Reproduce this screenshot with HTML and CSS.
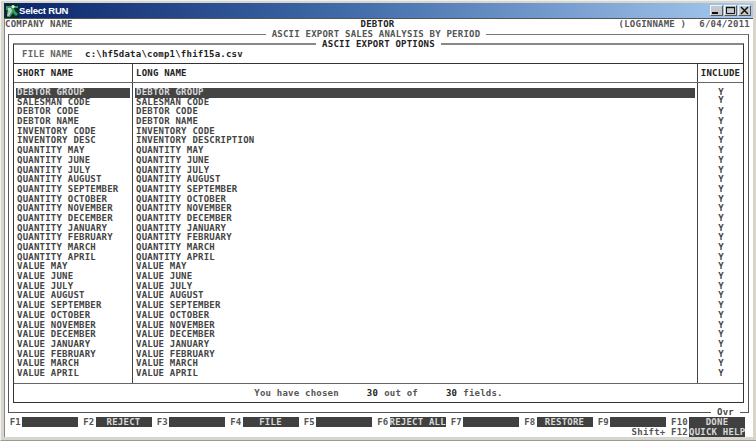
FILE: index.html
```html
<!DOCTYPE html>
<html lang="en">
<head>
<meta charset="utf-8">
<title>Select RUN</title>
<link rel="stylesheet" href="styles.css">
</head>
<body>
<div class="window">
  <div class="titlebar">
    <svg class="app-icon" width="14" height="14" viewBox="0 0 14 14">
      <rect width="14" height="14" fill="#0b2a24"/>
      <path d="M1 2h5l1 2 2-2h4v2H9l1 3 3 3-2 2-3-3-3 4H2l3-6-2-1H1z" fill="#2f9e5f"/>
      <circle cx="8" cy="2.5" r="1.6" fill="#e8f2ea"/>
      <path d="M3 4h3l1 3-3 5H2z" fill="#e8f2ea" opacity=".7"/>
    </svg>
    <span class="title-text">Select RUN</span>
    <div class="win-buttons">
      <span class="win-btn"><svg width="11" height="9" viewBox="0 0 11 9"><rect x="1" y="6" width="6" height="2" fill="#111"/></svg></span>
      <span class="win-btn"><svg width="11" height="9" viewBox="0 0 11 9"><path d="M1.5 1.5h8v6h-8z" fill="none" stroke="#111"/><path d="M1 1.5h9" stroke="#111" stroke-width="1.4"/></svg></span>
      <span class="win-btn"><svg width="11" height="9" viewBox="0 0 11 9"><path d="M2 1l7 7M9 1l-7 7" stroke="#111" stroke-width="1.5"/></svg></span>
    </div>
  </div>
  <div class="client">
    <div class="head-row">
      <span class="head-left">COMPANY NAME</span>
      <span class="head-mid">DEBTOR</span>
      <span class="head-right"><span>(LOGINNAME )</span><span>6/04/2011</span></span>
    </div>
    <div class="rule-title sub-title"><span>ASCII EXPORT SALES ANALYSIS BY PERIOD</span></div>
    <div class="outer-frame">
      <div class="rule-title options-title"><span>ASCII EXPORT OPTIONS</span></div>
      <div class="inner-frame">
        <div class="file-row"><span class="file-label">FILE NAME</span><span class="file-path">c:\hf5data\comp1\fhif15a.csv</span></div>
        <div class="grid-head">
          <div class="col-short">SHORT NAME</div>
          <div class="col-long">LONG NAME</div>
          <div class="col-inc">INCLUDE</div>
        </div>
        <div class="grid-body">
          <div class="col-short list">
            <div class="row sel">DEBTOR GROUP</div>
            <div class="row">SALESMAN CODE</div>
            <div class="row">DEBTOR CODE</div>
            <div class="row">DEBTOR NAME</div>
            <div class="row">INVENTORY CODE</div>
            <div class="row">INVENTORY DESC</div>
            <div class="row">QUANTITY MAY</div>
            <div class="row">QUANTITY JUNE</div>
            <div class="row">QUANTITY JULY</div>
            <div class="row">QUANTITY AUGUST</div>
            <div class="row">QUANTITY SEPTEMBER</div>
            <div class="row">QUANTITY OCTOBER</div>
            <div class="row">QUANTITY NOVEMBER</div>
            <div class="row">QUANTITY DECEMBER</div>
            <div class="row">QUANTITY JANUARY</div>
            <div class="row">QUANTITY FEBRUARY</div>
            <div class="row">QUANTITY MARCH</div>
            <div class="row">QUANTITY APRIL</div>
            <div class="row">VALUE MAY</div>
            <div class="row">VALUE JUNE</div>
            <div class="row">VALUE JULY</div>
            <div class="row">VALUE AUGUST</div>
            <div class="row">VALUE SEPTEMBER</div>
            <div class="row">VALUE OCTOBER</div>
            <div class="row">VALUE NOVEMBER</div>
            <div class="row">VALUE DECEMBER</div>
            <div class="row">VALUE JANUARY</div>
            <div class="row">VALUE FEBRUARY</div>
            <div class="row">VALUE MARCH</div>
            <div class="row">VALUE APRIL</div>
          </div>
          <div class="col-long list">
            <div class="row sel">DEBTOR GROUP</div>
            <div class="row">SALESMAN CODE</div>
            <div class="row">DEBTOR CODE</div>
            <div class="row">DEBTOR NAME</div>
            <div class="row">INVENTORY CODE</div>
            <div class="row">INVENTORY DESCRIPTION</div>
            <div class="row">QUANTITY MAY</div>
            <div class="row">QUANTITY JUNE</div>
            <div class="row">QUANTITY JULY</div>
            <div class="row">QUANTITY AUGUST</div>
            <div class="row">QUANTITY SEPTEMBER</div>
            <div class="row">QUANTITY OCTOBER</div>
            <div class="row">QUANTITY NOVEMBER</div>
            <div class="row">QUANTITY DECEMBER</div>
            <div class="row">QUANTITY JANUARY</div>
            <div class="row">QUANTITY FEBRUARY</div>
            <div class="row">QUANTITY MARCH</div>
            <div class="row">QUANTITY APRIL</div>
            <div class="row">VALUE MAY</div>
            <div class="row">VALUE JUNE</div>
            <div class="row">VALUE JULY</div>
            <div class="row">VALUE AUGUST</div>
            <div class="row">VALUE SEPTEMBER</div>
            <div class="row">VALUE OCTOBER</div>
            <div class="row">VALUE NOVEMBER</div>
            <div class="row">VALUE DECEMBER</div>
            <div class="row">VALUE JANUARY</div>
            <div class="row">VALUE FEBRUARY</div>
            <div class="row">VALUE MARCH</div>
            <div class="row">VALUE APRIL</div>
          </div>
          <div class="col-inc list">
            <div class="row">Y</div><div class="row row-up">Y</div><div class="row">Y</div><div class="row">Y</div><div class="row">Y</div>
            <div class="row">Y</div><div class="row">Y</div><div class="row">Y</div><div class="row">Y</div><div class="row">Y</div>
            <div class="row">Y</div><div class="row">Y</div><div class="row">Y</div><div class="row">Y</div><div class="row">Y</div>
            <div class="row">Y</div><div class="row">Y</div><div class="row">Y</div><div class="row">Y</div><div class="row">Y</div>
            <div class="row">Y</div><div class="row">Y</div><div class="row">Y</div><div class="row">Y</div><div class="row">Y</div>
            <div class="row">Y</div><div class="row">Y</div><div class="row">Y</div><div class="row">Y</div><div class="row">Y</div>
          </div>
        </div>
        <div class="summary"><span>You have chosen</span><b>30</b><span>out of</span><b>30</b><span>fields.</span></div>
      </div>
      <div class="ovr">Ovr</div>
    </div>
    <div class="fkeys">
      <div class="fkey"><span class="f-name">F1</span><span class="f-bar"></span></div>
      <div class="fkey"><span class="f-name">F2</span><span class="f-bar">REJECT</span></div>
      <div class="fkey"><span class="f-name">F3</span><span class="f-bar"></span></div>
      <div class="fkey"><span class="f-name">F4</span><span class="f-bar">FILE</span></div>
      <div class="fkey"><span class="f-name">F5</span><span class="f-bar"></span></div>
      <div class="fkey"><span class="f-name">F6</span><span class="f-bar">REJECT ALL</span></div>
      <div class="fkey"><span class="f-name">F7</span><span class="f-bar"></span></div>
      <div class="fkey"><span class="f-name">F8</span><span class="f-bar">RESTORE</span></div>
      <div class="fkey"><span class="f-name">F9</span><span class="f-bar"></span></div>
      <div class="fkey-stack">
        <div class="fkey"><span class="f-name">F10</span><span class="f-bar">DONE</span></div>
        <div class="fkey"><span class="f-name">Shift+ F12</span><span class="f-bar">QUICK HELP</span></div>
      </div>
    </div>
  </div>
</div>
</body>
</html>
```
FILE: styles.css
```css
* { box-sizing: border-box; }
html, body { margin: 0; padding: 0; }
body { width: 756px; height: 441px; overflow: hidden; background: #d4d0c8; }
.window {
  width: 756px; height: 441px;
  display: flex; flex-direction: column;
  padding: 2px 3px 3px 3px;
  background: #d8d5cd;
  border-left: 1px solid #f2f2f0;
  border-top: 1px solid #f0f0ee;
  border-bottom: 1px solid #9a9a96;
  font: bold 9px/1 "DejaVu Sans Mono", monospace;
  letter-spacing: .22px;
  color: #3c3c3c;
}
.titlebar {
  height: 15px; flex: none;
  display: flex; align-items: center;
  padding-left: 1px;
  background: linear-gradient(90deg, #0a246a 0%, #3f6aa8 45%, #a6caf0 100%);
}
.app-icon { flex: none; }
.title-text {
  margin-left: 0;
  font: bold 9.5px/1 "Liberation Sans", sans-serif;
  letter-spacing: -.2px;
  color: #fff;
}
.win-buttons { margin-left: auto; margin-right: 2px; display: flex; gap: 1px; }
.win-btn {
  width: 13px; height: 11px;
  display: flex; align-items: center; justify-content: center;
  background: #c4c8cc;
  border: 1px solid; border-color: #f4f4f2 #5a5a58 #5a5a58 #f4f4f2;
}
.client {
  flex: 1; min-height: 0; position: relative;
  background: #fff;
  border-top: 1px solid #555;
  border-left: 1px solid #888;
}
.head-row {
  height: 10px; display: grid; grid-template-columns: 1fr auto 1fr;
  line-height: 10px; padding-right: 3px;
}
.head-left { color: #555; }
.head-mid { color: #222; }
.head-right { display: flex; justify-content: flex-end; gap: 13px; color: #555; }
.rule-title {
  display: flex; align-items: center; justify-content: center;
  height: 10px; line-height: 10px;
}
.rule-title span { padding: 0 6px; background: #fff; }
.sub-title { color: #555; position: relative; z-index: 1; padding-right: 6px; }
.outer-frame {
  position: relative;
  margin: -5px 4px 0 3px;
  height: 379px;
  border: 1px solid #555;
  border-top-color: #777;
  padding: 0 4px 9px 4px;
  display: flex; flex-direction: column;
}
.options-title { color: #222; position: absolute; top: 4px; left: 5px; right: 5px; z-index: 1; }
.inner-frame {
  margin-top: 8px;
  flex: 1; min-height: 0;
  display: flex; flex-direction: column;
  border: 1px solid #333;
  border-top: 2px solid #888;
}
.file-row { height: 18px; flex: none; display: flex; align-items: center; padding-left: 8px; color: #666; }
.file-label { width: 63px; }
.file-path { color: #222; }
.grid-head, .grid-body { display: grid; grid-template-columns: 119px 565px 1fr; }
.grid-head {
  height: 20px; flex: none; border-top: 1px solid #333; border-bottom: 1px solid #666;
  line-height: 18px; color: #222;
}
.grid-head .col-short, .grid-head .col-long { padding-left: 3px; border-right: 1px solid #444; }
.grid-head .col-inc { text-align: center; }
.grid-body { height: 301px; flex: none; border-bottom: 1px solid #666; }
.list { padding-top: 5px; }
.col-short.list, .col-long.list { border-right: 1px solid #444; padding-left: 2px; padding-right: 2px; }
.row { height: 9.69px; line-height: 9.69px; padding-left: 1px; white-space: pre; color: #444; }
.row.sel { background: #444; color: #d8d8d8; }
.col-inc.list .row { text-align: center; }
.row-up { transform: translateY(-2px); }
.summary {
  height: 18px; flex: none; display: flex; justify-content: center; align-items: center;
  color: #555;
}
.summary span:nth-child(1) { margin-right: 28px; }
.summary span:nth-child(3) { margin: 0 28px 0 6px; }
.summary span:nth-child(5) { margin-left: 6px; }
.summary b { color: #222; }
.ovr {
  position: absolute; right: 8px; bottom: -5px;
  background: #fff; padding: 0 6px; height: 10px; line-height: 10px; color: #444;
}
.fkeys {
  display: flex; align-items: flex-start;
  padding: 4px 0 0 6px; gap: 6.5px;
}
.fkey { display: flex; align-items: center; justify-content: flex-end; width: 67px; height: 10px; flex: none; }
.f-name { color: #555; white-space: pre; margin-right: 1px; }
.f-bar {
  width: 56px; height: 10px; line-height: 10px; text-align: center; flex: none;
  background: #404040; color: #d8d8d8; white-space: pre;
}
.fkey-stack { width: 72.5px; flex: none; display: flex; flex-direction: column; align-items: flex-end; }
.fkey-stack .fkey { width: max-content; }
```
